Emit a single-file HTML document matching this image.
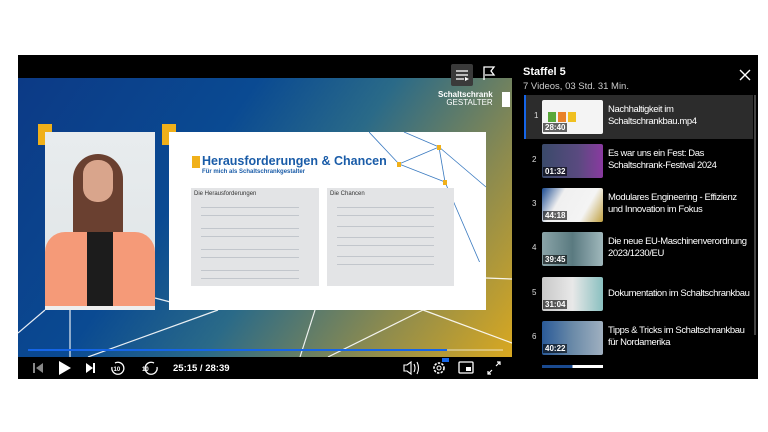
<!DOCTYPE html>
<html><head><meta charset="utf-8"><style>
*{margin:0;padding:0;box-sizing:border-box}
body{width:768px;height:432px;background:#fff;position:relative;overflow:hidden;font-family:"Liberation Sans",sans-serif}
.abs{position:absolute}
#player{left:18px;top:55px;width:740px;height:324px;background:#000}
#video{left:18px;top:78px;width:494px;height:279px;background:linear-gradient(125deg,#0c3a86 0%,#0a4a92 35%,#2a6a88 55%,#8a8a50 78%,#d9a820 100%);overflow:hidden}
.sq{background:#f0b01a;width:14px;height:21px}
#pres{left:27px;top:54px;width:110px;height:178px;background:linear-gradient(#e8ecee,#dfe4e6)}
#slide{left:151px;top:54px;width:317px;height:178px;background:#fff}
.box{background:#e3e4e6;position:absolute;top:56px;height:98px}
.ln{height:1px;background:#c2c6cc;margin:7px 20px 0 10px}
.item{left:524px;width:232px;height:44px}
.thumb{position:absolute;left:18px;top:5px;width:61px;height:34px;border-radius:2px}
.dur{position:absolute;left:1px;bottom:2px;background:rgba(0,0,0,.6);color:#fff;font-size:8px;font-weight:bold;padding:0 2px}
.num{position:absolute;left:8px;top:16px;color:#ddd;font-size:8px}
.tt{position:absolute;left:84px;top:9px;color:#fff;font-size:9.5px;line-height:12px;white-space:nowrap;letter-spacing:-0.4px}
</style></head><body>
<div id="player" class="abs"></div>
<div id="video" class="abs">
<svg class="abs" style="left:0;top:0" width="494" height="279"><g stroke="#fff" stroke-width="1.2" fill="none" opacity=".9">
<line x1="0" y1="255" x2="27" y2="232"/><line x1="52" y1="232" x2="52" y2="279"/><line x1="137" y1="220" x2="160" y2="226"/>
<line x1="70" y1="279" x2="200" y2="232"/><line x1="297" y1="232" x2="282" y2="279"/><line x1="310" y1="279" x2="405" y2="232"/>
<line x1="405" y1="232" x2="494" y2="265"/><line x1="468" y1="200" x2="494" y2="201"/></g></svg>
<div class="abs sq" style="left:20px;top:46px"></div>
<div class="abs sq" style="left:144px;top:46px"></div>
<div id="pres" class="abs">
<div class="abs" style="left:28px;top:22px;width:50px;height:100px;background:#6a4030;border-radius:25px 25px 6px 6px"></div>
<div class="abs" style="left:38px;top:28px;width:30px;height:42px;background:#d9a58c;border-radius:14px"></div>
<div class="abs" style="left:0;top:100px;width:110px;height:74px;background:#f59a78;border-radius:20px 20px 0 0"></div>
<div class="abs" style="left:42px;top:100px;width:26px;height:74px;background:#1c1c1c"></div>
<div class="abs" style="left:0;top:174px;width:110px;height:4px;background:#eee"></div>
</div>
<div id="slide" class="abs">
<svg class="abs" style="left:200px;top:0" width="117" height="130"><g stroke="#3a7ac0" stroke-width=".8"><line x1="0" y1="0" x2="30" y2="32"/><line x1="30" y1="32" x2="70" y2="15"/><line x1="30" y1="32" x2="76" y2="50"/><line x1="70" y1="15" x2="117" y2="55"/><line x1="70" y1="15" x2="76" y2="50"/><line x1="76" y1="50" x2="117" y2="145"/><line x1="35" y1="0" x2="70" y2="15"/></g>
<rect x="28" y="30" width="4" height="5" fill="#f0b01a"/><rect x="68" y="13" width="4" height="5" fill="#f0b01a"/><rect x="74" y="48" width="4" height="5" fill="#f0b01a"/></svg>
<div class="abs" style="left:23px;top:24px;width:8px;height:12px;background:#f0b01a"></div>
<div class="abs" style="left:33px;top:22px;color:#1a5ca8;font-size:12.5px;font-weight:bold">Herausforderungen &amp; Chancen</div>
<div class="abs" style="left:33px;top:37px;color:#1a5ca8;font-size:6px;font-weight:bold">Für mich als Schaltschrankgestalter</div>
<div class="box" style="left:22px;width:128px"><div style="font-size:6px;color:#333;padding:3px 3px">Die Herausforderungen</div><div class="ln"></div><div class="ln"></div><div class="ln" style="margin-top:12px"></div><div class="ln"></div><div class="ln" style="margin-top:12px"></div><div class="ln"></div><div class="ln" style="margin-top:12px"></div><div class="ln"></div></div>
<div class="box" style="left:158px;width:127px"><div style="font-size:6px;color:#333;padding:3px 3px">Die Chancen</div><div class="ln"></div><div class="ln"></div><div class="ln" style="margin-top:10px"></div><div class="ln" style="margin-top:10px"></div><div class="ln"></div><div class="ln" style="margin-top:10px"></div><div class="ln"></div></div>
</div>
<div class="abs" style="left:420px;top:13px;color:#fff;font-size:8px;font-weight:bold;line-height:8px;text-align:right">Schaltschrank<br><span style="font-weight:normal">GESTALTER</span></div>
<div class="abs" style="left:484px;top:14px;width:8px;height:15px;background:#fff"></div>
<div class="abs" style="left:10px;top:271px;width:419px;height:2px;background:#1565e8"></div>
<div class="abs" style="left:429px;top:271px;width:56px;height:2px;background:rgba(255,255,255,.35)"></div>
</div>
<div class="abs" style="left:451px;top:64px;width:22px;height:22px;background:#3a3a3a;border-radius:2px"></div>
<svg class="abs" style="left:451px;top:64px" width="22" height="22"><g stroke="#fff" stroke-width="1.3"><line x1="5" y1="7" x2="17" y2="7"/><line x1="5" y1="11" x2="17" y2="11"/><line x1="5" y1="15" x2="13" y2="15"/></g><path d="M14 13l4 2-4 2z" fill="#fff"/></svg>
<svg class="abs" style="left:481px;top:64px" width="16" height="18"><path d="M3 16V3h10l-3 4 3 4H4" stroke="#fff" stroke-width="1.3" fill="none"/></svg>
<svg class="abs" style="left:18px;top:357px" width="494" height="22" fill="#ccc" stroke="none">
<path d="M15 6h2v10h-2zM25 6l-7 5 7 5z" fill="#888"/>
<path d="M41 4l12 7-12 7z" fill="#fff"/>
<path d="M68 6l7 5-7 5zM75 6h2v10h-2z" fill="#fff"/>
<g fill="none" stroke="#fff" stroke-width="1.3"><path d="M97 6a6 6 0 1 1-3 4"/><path d="M136 6a6 6 0 1 0 3 4"/></g>
<text x="95.5" y="14" font-size="6" fill="#fff" font-weight="bold" font-family="Liberation Sans">10</text>
<text x="124" y="14" font-size="6" fill="#fff" font-weight="bold" font-family="Liberation Sans">10</text>
<text x="155" y="14" font-size="9.5" fill="#fff" font-weight="bold" font-family="Liberation Sans">25:15 / 28:39</text>
<path d="M386 8h3l4-3v12l-4-3h-3z" fill="none" stroke="#fff" stroke-width="1.1"/>
<path d="M396 7q2 4 0 8M399 5q3 6 0 12" fill="none" stroke="#fff" stroke-width="1.1"/>
<circle cx="421" cy="11" r="5" fill="none" stroke="#fff" stroke-width="1.6" stroke-dasharray="2.4 1.3"/><circle cx="421" cy="11" r="2" fill="none" stroke="#fff"/>
<rect x="424" y="1" width="7" height="4" fill="#1565e8"/>
<rect x="441" y="5" width="14" height="11" rx="1" fill="none" stroke="#fff" stroke-width="1.3"/><rect x="448" y="10" width="5" height="4" fill="#fff"/>
<path d="M470 17l4-4M470 14v3h3M478 9l4-4M479 5h3v3" fill="none" stroke="#fff" stroke-width="1.2"/>
</svg>
<div class="abs" style="left:523px;top:66px;color:#fff;font-size:11px;font-weight:bold">Staffel 5</div>
<div class="abs" style="left:523px;top:81px;color:#ccc;font-size:9.5px">7 Videos, 03 Std. 31 Min.</div>
<svg class="abs" style="left:739px;top:69px" width="12" height="12"><path d="M1 1l10 10M11 1L1 11" stroke="#fff" stroke-width="1.4"/></svg>
<div class="abs" style="left:754px;top:95px;width:2px;height:240px;background:#444"></div>
<div class="abs item" style="top:95px;width:229px;background:#2c2c2c;border-left:2px solid #1565e8"><div class="num">1</div><div class="thumb" style="background:#f4f4f4;left:16px"><div style="position:absolute;left:6px;top:12px;width:8px;height:10px;background:#5aa83a"></div><div style="position:absolute;left:16px;top:12px;width:8px;height:10px;background:#e9822a"></div><div style="position:absolute;left:26px;top:12px;width:8px;height:10px;background:#f0c020"></div><span class="dur">28:40</span></div><div class="tt" style="left:82px">Nachhaltigkeit im<br>Schaltschrankbau.mp4</div></div>
<div class="abs item" style="top:139px"><div class="num">2</div><div class="thumb" style="background:linear-gradient(90deg,#3a4a6a,#5a4a80 60%,#8a3aa0)"><span class="dur">01:32</span></div><div class="tt">Es war uns ein Fest: Das<br>Schaltschrank-Festival 2024</div></div>
<div class="abs item" style="top:183px"><div class="num">3</div><div class="thumb" style="background:linear-gradient(120deg,#1a4a90,#f0f0f0 30%,#f4f4f4 70%,#c0a040)"><span class="dur">44:18</span></div><div class="tt">Modulares Engineering - Effizienz<br>und Innovation im Fokus</div></div>
<div class="abs item" style="top:227px"><div class="num">4</div><div class="thumb" style="background:linear-gradient(90deg,#8aa4a8,#5a7a80,#a0b8bc)"><span class="dur">39:45</span></div><div class="tt">Die neue EU-Maschinenverordnung<br>2023/1230/EU</div></div>
<div class="abs item" style="top:272px"><div class="num">5</div><div class="thumb" style="background:linear-gradient(90deg,#c8c8c8,#e8e8e8,#8ac0c0)"><span class="dur">31:04</span></div><div class="tt" style="top:16px">Dokumentation im Schaltschrankbau</div></div>
<div class="abs item" style="top:316px"><div class="num">6</div><div class="thumb" style="background:linear-gradient(90deg,#2a5a98,#6a8aa8,#a0b0c0)"><span class="dur">40:22</span></div><div class="tt">Tipps &amp; Tricks im Schaltschrankbau<br>für Nordamerika</div></div>
<div class="abs" style="left:542px;top:365px;width:61px;height:3px;background:linear-gradient(90deg,#1a4a90 50%,#fff 50%)"></div>
</body></html>
